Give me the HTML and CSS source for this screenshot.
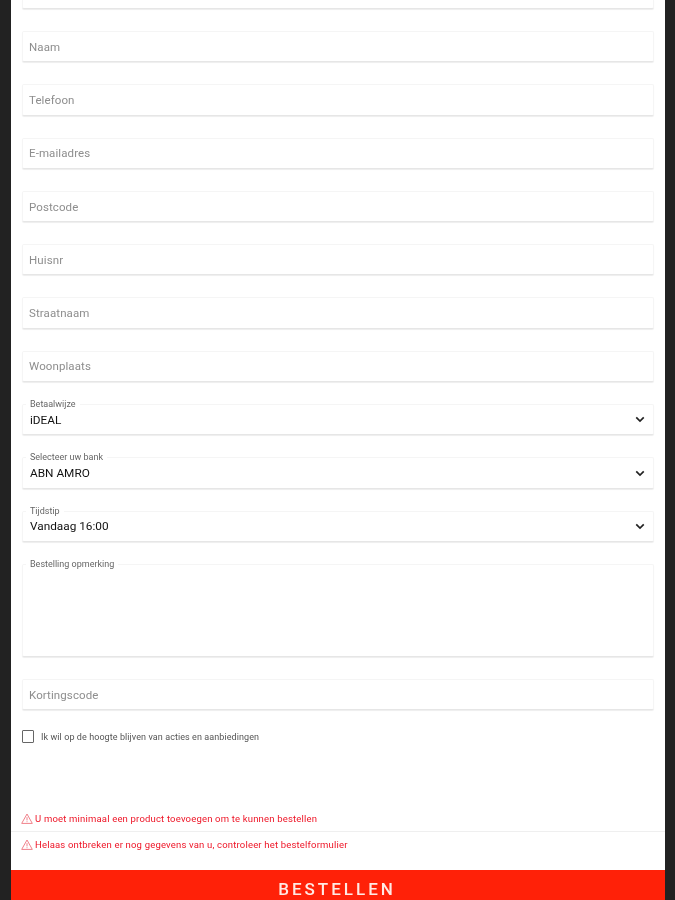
FILE: index.html
```html
<!doctype html>
<html lang="nl">

<head>
  <meta charset="UTF-8" />
  <meta name="viewport" content="width=device-width, initial-scale=1.0" />
  <title>Bestellen</title>
  <link rel="stylesheet" href="styles.css">
</head>

<body>
  <div class="panel">
    <form class="order-form">
      <div class="field field-cut"></div>
      <div class="field"><span class="placeholder">Naam</span></div>
      <div class="field"><span class="placeholder">Telefoon</span></div>
      <div class="field"><span class="placeholder">E-mailadres</span></div>
      <div class="field"><span class="placeholder">Postcode</span></div>
      <div class="field"><span class="placeholder">Huisnr</span></div>
      <div class="field"><span class="placeholder">Straatnaam</span></div>
      <div class="field"><span class="placeholder">Woonplaats</span></div>

      <div class="field field-select">
        <label class="legend">Betaalwijze</label>
        <span class="value">iDEAL</span>
        <svg class="chevron" viewBox="0 0 12 8"><path d="M1.5 1.5 6 6l4.500-4.500" /></svg>
      </div>
      <div class="field field-select">
        <label class="legend">Selecteer uw bank</label>
        <span class="value">ABN AMRO</span>
        <svg class="chevron" viewBox="0 0 12 8"><path d="M1.5 1.5 6 6l4.500-4.500" /></svg>
      </div>
      <div class="field field-select">
        <label class="legend">Tijdstip</label>
        <span class="value">Vandaag 16:00</span>
        <svg class="chevron" viewBox="0 0 12 8"><path d="M1.5 1.5 6 6l4.500-4.500" /></svg>
      </div>

      <div class="field field-area">
        <label class="legend">Bestelling opmerking</label>
      </div>

      <div class="field"><span class="placeholder">Kortingscode</span></div>
    </form>

    <div class="newsletter">
      <i class="checkbox"></i>
      <span>Ik wil op de hoogte blijven van acties en aanbiedingen</span>
    </div>

    <div class="errors">
      <div class="error">
        <svg class="warn" viewBox="0 0 12 11"><path d="M6 1 11.300 10.400H.7Z M6 4.200v3.200 M6 8.300v.9" /></svg>
        <span>U moet minimaal een product toevoegen om te kunnen bestellen</span>
      </div>
      <div class="error">
        <svg class="warn" viewBox="0 0 12 11"><path d="M6 1 11.300 10.400H.7Z M6 4.200v3.200 M6 8.300v.9" /></svg>
        <span>Helaas ontbreken er nog gegevens van u, controleer het bestelformulier</span>
      </div>
    </div>

    <button class="order-btn" type="button">BESTELLEN</button>
  </div>
</body>

</html>
```

FILE: styles.css
```css
* {
  box-sizing: border-box;
}

html,
body {
  height: 900px;
  margin: 0;
  overflow: hidden;
}

body {
  background-color: #222;
  padding: 0 10px 0 11px;
  font-family: Roboto, "Liberation Sans", sans-serif;
}

/* the reference is a scaled up capture, everything in it is a little soft */
.panel {
  height: 900px;
  display: flex;
  flex-direction: column;
  background-color: #fff;
  filter: blur(.5px);
}

.order-form {
  display: flex;
  flex-direction: column;
  gap: 22px;
  padding: 0 11px;
}

.field {
  position: relative;
  height: 31.3px;
  display: flex;
  align-items: center;
  padding: 0 6px;
  background-color: #fff;
  border: 1px solid #f5f5f5;
  border-bottom-color: #e6e6e6;
  box-shadow: 0 1px 1px #eee;
  border-radius: 2px;
}

.field-cut {
  height: 9px;
  border-top: 0;
  border-radius: 0 0 2px 2px;
}

.field-area {
  height: 93px;
}

.placeholder {
  font-size: 11.500px;
  letter-spacing: .1px;
  color: #8e8e8e;
}

.field-select {
  justify-content: space-between;
  padding: 0 7px;
}

.value {
  font-size: 11.800px;
  color: #111;
}

.legend {
  position: absolute;
  top: -6px;
  left: 3px;
  padding: 0 4px;
  background-color: #fff;
  font-size: 9px;
  line-height: 10px;
  color: #666;
}

.chevron {
  width: 10px;
  height: 7px;
  margin-right: 1px;
  fill: none;
  stroke: #222;
  stroke-width: 2;
}

.newsletter {
  display: flex;
  align-items: center;
  gap: 7px;
  margin: 20px 0 0 11px;
  font-size: 9px;
  letter-spacing: .08px;
  color: #555;
}

.checkbox {
  width: 12px;
  height: 13px;
  border: 1.500px solid #666;
  border-radius: 1px;
}

.errors {
  margin-top: auto;
  padding-bottom: 13px;
}

.error {
  display: flex;
  align-items: center;
  gap: 2px;
  height: 26px;
  padding-left: 10px;
  font-size: 9.500px;
  letter-spacing: .18px;
  color: #ee1426;
}

.error + .error {
  border-top: 1px solid #efefef;
}

.warn {
  width: 12px;
  height: 11px;
  fill: none;
  stroke: #f0808a;
  stroke-width: 1;
}

.order-btn {
  flex-shrink: 0;
  height: 30px;
  border: 0;
  padding: 8px 2px 0 0;
  background-color: #ff2108;
  color: #ffe9e4;
  font-family: inherit;
  font-size: 17px;
  font-weight: 500;
  letter-spacing: 3px;
}
```
